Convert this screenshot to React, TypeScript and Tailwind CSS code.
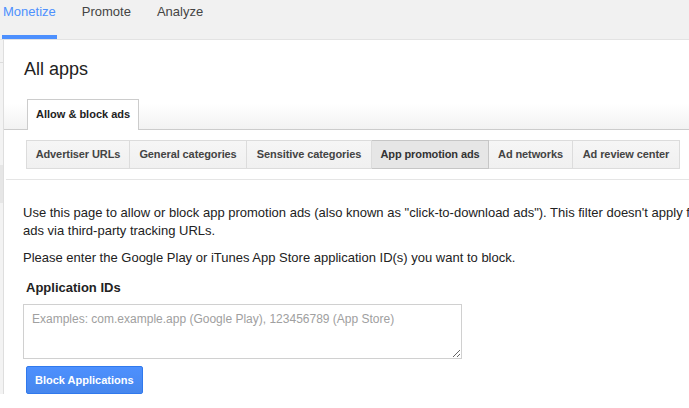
import React from "react";

// ── Config ────────────────────────────────────────────────────────────────────

const NAV = ["Monetize", "Promote", "Analyze"];

const SUB_TABS = [
  { label: "Advertiser URLs", w: "w-[104px]" },
  { label: "General categories", w: "w-[117px]" },
  { label: "Sensitive categories", w: "w-[125px]" },
  { label: "App promotion ads", w: "w-[117px]" },
  { label: "Ad networks", w: "w-[84px]" },
  { label: "Ad review center", w: "w-[107px]" },
];

const ACTIVE_SUB = "App promotion ads";

// ── Top nav ───────────────────────────────────────────────────────────────────

function TopNav() {
  return (
    <div className="flex h-[40px] gap-[24px] border-b border-[#e3e3e3] bg-[#f1f1f1] pl-[2px]">
      {NAV.map((label, i) => (
        <div
          key={label}
          className={
            i === 0
              ? "flex h-[39px] flex-col border-b-[4px] border-[#4d90fe] px-[1px] pt-[4px] text-[13px] leading-[16px] text-[#4d90fe]"
              : "flex h-[39px] flex-col px-[1px] pt-[4px] text-[13px] leading-[16px] text-[#444]"
          }
        >
          {label}
        </div>
      ))}
    </div>
  );
}

// ── Sub tabs ──────────────────────────────────────────────────────────────────

function SubTabs() {
  return (
    <div className="ml-[22px] mt-[10px] flex">
      {SUB_TABS.map(({ label, w }, i) => {
        const active = label === ACTIVE_SUB;
        return (
          <div
            key={label}
            className={
              (active
                ? "border-[#c6c6c6] bg-[#e6e6e6] text-[#333] "
                : "border-[#dcdcdc] bg-gradient-to-b from-[#f6f6f6] to-[#f0f0f0] text-[#444] ") +
              (i === 0 ? "border " : "border border-l-0 ") +
              w +
              " flex h-[29px] items-center justify-center whitespace-nowrap text-[11px] font-bold tracking-[-0.1px]"
            }
          >
            {label}
          </div>
        );
      })}
    </div>
  );
}

// ── Main ──────────────────────────────────────────────────────────────────────

export default function App() {
  return (
    <div className="h-screen w-full overflow-hidden bg-white font-['Liberation_Sans',Arial,sans-serif] text-[#222]">
      <TopNav />

      <div className="flex">
        {/* Left strip */}
        <div className="flex w-[4px] shrink-0 flex-col border-r border-[#dedede] bg-[#f3f3f3]">
          <div className="h-[22px]" />
          <div className="h-px bg-[#dcdcdc]" />
          <div className="h-[102px]" />
          <div className="h-[38px] bg-[#e6e6e6]" />
        </div>

        <div className="min-w-0 flex-1">
          {/* Page title */}
          <div className="pl-[20px] pt-[18px] text-[18px] leading-[22px] text-[#222]">All apps</div>

          {/* Primary tab band */}
          <div className="mt-[17px] flex h-[33px] items-end border-b border-[#cccccc] bg-gradient-to-b from-white from-20% to-[#f2f2f2] pl-[23px]">
            <div className="-mb-px flex h-[31px] items-center border border-b-0 border-[#cccccc] bg-white px-[8px] pb-[2px] text-[11px] font-bold text-[#222]">
              Allow &amp; block ads
            </div>
          </div>

          <SubTabs />

          <div className="ml-[2px] mt-[10px] h-px bg-[#e5e5e5]" />

          {/* Body */}
          <div className="pl-[19px] pt-[24px] text-[13px] leading-[18px]">
            <p className="whitespace-nowrap">
              Use this page to allow or block app promotion ads (also known as "click-to-download ads"). This filter doesn't apply for app promotion
              <br />
              ads via third-party tracking URLs.
            </p>
            <p className="mt-[9px]">Please enter the Google Play or iTunes App Store application ID(s) you want to block.</p>

            <div className="mt-[12px] pl-[3px] font-bold">Application IDs</div>

            <textarea
              className="mt-[7px] block h-[55px] w-[439px] border border-[#d0d0d0] px-[8px] pt-[7px] text-[12px] leading-[15px] text-[#222] outline-none placeholder:text-[#a0a0a0]"
              placeholder="Examples: com.example.app (Google Play), 123456789 (App Store)"
            />

            <button className="ml-[3px] mt-[7px] flex h-[28px] items-center rounded-[2px] border border-[#3079ed] bg-gradient-to-b from-[#4d90fe] to-[#4787ed] px-[8px] text-[11px] font-bold text-white">
              Block Applications
            </button>
          </div>
        </div>
      </div>
    </div>
  );
}
